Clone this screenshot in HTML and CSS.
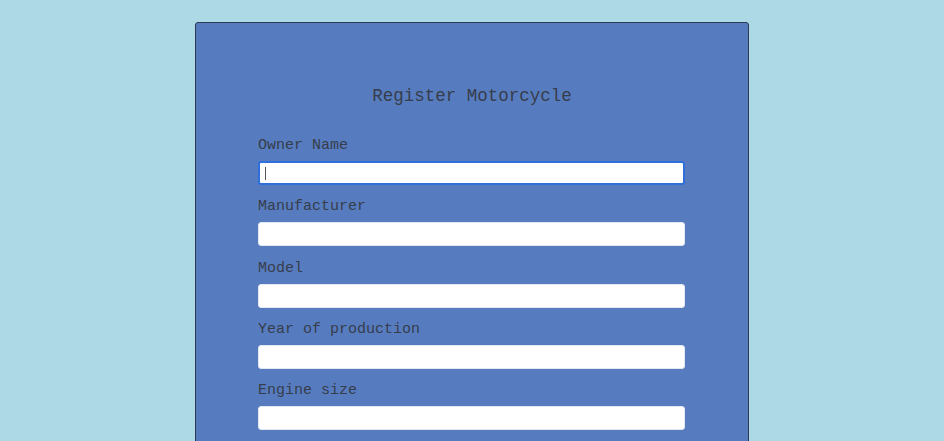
FILE: index.html
```html
<!DOCTYPE html>
<html lang="en">
<head>
<meta charset="utf-8">
<title>Register Motorcycle</title>
<link rel="stylesheet" href="styles.css">
</head>
<body>
<div class="card">
  <h1 class="title">Register Motorcycle</h1>
  <form class="form">
    <label class="label">Owner Name</label>
    <div class="field">
      <input class="input input-focus" type="text">
      <span class="caret"></span>
    </div>
    <label class="label">Manufacturer</label>
    <div class="field"><input class="input" type="text"></div>
    <label class="label">Model</label>
    <div class="field"><input class="input" type="text"></div>
    <label class="label">Year of production</label>
    <div class="field"><input class="input" type="text"></div>
    <label class="label">Engine size</label>
    <div class="field"><input class="input" type="text"></div>
  </form>
</div>
</body>
</html>
```
FILE: styles.css
```css
html, body {
  margin: 0;
  padding: 0;
  background: #add8e6;
  height: 100%;
  overflow: hidden;
}
.card {
  box-sizing: border-box;
  width: 554px;
  height: 600px;
  margin: 22px auto 0;
  background: #567cbf;
  border: 1px solid #2a3a52;
  border-radius: 3px;
  padding: 63px 62px 0;
  font-family: "Liberation Mono", "Courier New", monospace;
  color: #363d4c;
}
.title {
  margin: 0 0 31px;
  font-size: 17.5px;
  line-height: 20px;
  font-weight: normal;
  text-align: center;
}
.form {
  display: flex;
  flex-direction: column;
}
.label {
  display: block;
  font-size: 15px;
  line-height: 18px;
  margin-bottom: 6px;
}
.field {
  position: relative;
  margin-bottom: 13.25px;
}
.input {
  display: block;
  box-sizing: border-box;
  width: 427px;
  height: 24px;
  margin: 0;
  border: 1px solid #e3e7ef;
  border-radius: 3px;
  background: #fff;
  outline: none;
  padding: 0 6px;
  font-family: inherit;
}
.input-focus {
  border: 2px solid #2f6fdc;
}
.caret {
  position: absolute;
  left: 7px;
  top: 6px;
  width: 1px;
  height: 13px;
  background: #555;
}
```
